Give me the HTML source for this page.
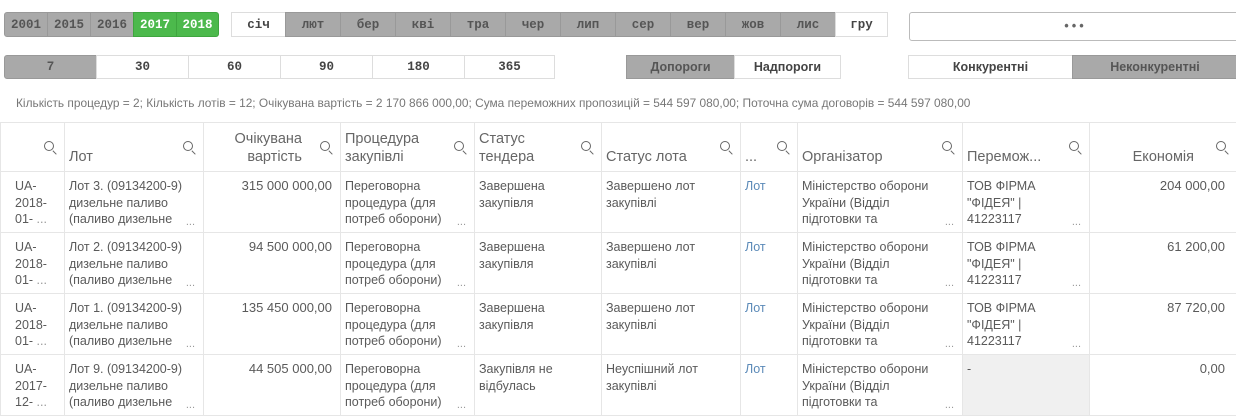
<!DOCTYPE html>
<html><head><meta charset="utf-8"><style>
body{margin:0;width:1236px;height:413px;overflow:hidden;background:#fff;font-family:"Liberation Sans","DejaVu Sans",sans-serif;position:relative}
.b{position:absolute;box-sizing:border-box;display:flex;align-items:center;justify-content:center;font-family:"Liberation Mono",monospace;font-weight:bold;font-size:12.5px;color:#595959;border:1px solid #ddd}
.g{background:#a9a9a9;border-color:#999;color:#555}
.gr{background:#4cb94c;border-color:#3fa53f;color:#fff}
.w{background:#fff;color:#444}
.sum{position:absolute;left:16px;top:96px;font-size:11.9px;color:#777;white-space:nowrap}
table{position:absolute;left:0;top:122px;border-collapse:collapse;table-layout:fixed;width:1236px;font-size:12.5px;color:#5a5a5a}
td,th{border:1px solid #e6e6e6;vertical-align:top;padding:0 20px 0 4px;overflow:hidden;position:relative;box-sizing:border-box}
th{height:49px;font-weight:normal;font-size:14.5px;color:#666;text-align:left;vertical-align:bottom;padding-bottom:5px;line-height:18px}
td{height:61px;padding-top:6px;line-height:16.5px}
th .q{position:absolute;right:10px;top:18px;width:8px;height:8px;border:1.3px solid #666;border-radius:50%}
th .q:after{content:"";position:absolute;right:-4px;bottom:-3px;width:5px;height:1.3px;background:#666;transform:rotate(45deg)}
.r{text-align:right}
td.m{font-size:13px;padding-right:8px;white-space:nowrap}
td.e{padding-right:11px}
.d{position:absolute;right:8px;bottom:2px;color:#999;font-size:11px}
.l{color:#5b8ab8}
td.f{padding-left:14px;padding-right:2px}
</style></head><body>
<div class="b g" style="left:4px;top:12px;width:44px;height:25px;border-radius:3px 0 0 3px">2001</div>
<div class="b g" style="left:47px;top:12px;width:44px;height:25px">2015</div>
<div class="b g" style="left:90px;top:12px;width:44px;height:25px">2016</div>
<div class="b gr" style="left:133px;top:12px;width:44px;height:25px">2017</div>
<div class="b gr" style="left:176px;top:12px;width:43px;height:25px;border-radius:0 3px 3px 0">2018</div>
<div class="b w" style="left:231px;top:12px;width:55px;height:25px">січ</div>
<div class="b g" style="left:285px;top:12px;width:56px;height:25px">лют</div>
<div class="b g" style="left:340px;top:12px;width:56px;height:25px">бер</div>
<div class="b g" style="left:395px;top:12px;width:56px;height:25px">кві</div>
<div class="b g" style="left:450px;top:12px;width:56px;height:25px">тра</div>
<div class="b g" style="left:505px;top:12px;width:56px;height:25px">чер</div>
<div class="b g" style="left:560px;top:12px;width:56px;height:25px">лип</div>
<div class="b g" style="left:615px;top:12px;width:56px;height:25px">сер</div>
<div class="b g" style="left:670px;top:12px;width:56px;height:25px">вер</div>
<div class="b g" style="left:725px;top:12px;width:56px;height:25px">жов</div>
<div class="b g" style="left:780px;top:12px;width:56px;height:25px">лис</div>
<div class="b w" style="left:835px;top:12px;width:53px;height:25px">гру</div>
<div class="b w" style="left:909px;top:12px;width:330px;height:29px;border-color:#bbb;border-radius:3px;color:#666">•••</div>
<div class="b g" style="left:4px;top:55px;width:93px;height:24px;border-radius:3px 0 0 3px">7</div>
<div class="b w" style="left:96px;top:55px;width:93px;height:24px">30</div>
<div class="b w" style="left:188px;top:55px;width:93px;height:24px">60</div>
<div class="b w" style="left:280px;top:55px;width:93px;height:24px">90</div>
<div class="b w" style="left:372px;top:55px;width:93px;height:24px">180</div>
<div class="b w" style="left:464px;top:55px;width:91px;height:24px">365</div>
<div class="b g" style="left:626px;top:55px;width:109px;height:24px;font-family:'Liberation Sans',sans-serif">Допороги</div>
<div class="b w" style="left:734px;top:55px;width:107px;height:24px;font-family:'Liberation Sans',sans-serif">Надпороги</div>
<div class="b w" style="left:908px;top:55px;width:165px;height:24px;font-family:'Liberation Sans',sans-serif">Конкурентні</div>
<div class="b g" style="left:1072px;top:55px;width:166px;height:24px;font-family:'Liberation Sans',sans-serif">Неконкурентні</div>
<div class="sum">Кількість процедур = 2; Кількість лотів = 12; Очікувана вартість = 2 170 866 000,00; Сума переможних пропозицій = 544 597 080,00; Поточна сума договорів = 544 597 080,00</div>
<table>
<colgroup><col style="width:64px"><col style="width:139px"><col style="width:137px"><col style="width:134px"><col style="width:127px"><col style="width:139px"><col style="width:57px"><col style="width:165px"><col style="width:127px"><col style="width:147px"></colgroup>
<tr><th><span class="q"></span></th><th>Лот<span class="q"></span></th><th class="r" style="padding-right:38px">Очікувана<br>вартість<span class="q"></span></th><th>Процедура<br>закупівлі<span class="q"></span></th><th>Статус<br>тендера<span class="q"></span></th><th>Статус лота<span class="q"></span></th><th>...<span class="q"></span></th><th>Організатор<span class="q"></span></th><th>Перемож...<span class="q"></span></th><th class="r" style="padding-right:42px">Економія<span class="q"></span></th></tr>
<tr><td class="f">UA-<br>2018-<br>01- <span style="color:#999">...</span></td><td>Лот 3. (09134200-9) дизельне паливо (паливо дизельне<span class="d">...</span></td><td class="r m">315 000 000,00</td><td>Переговорна процедура (для потреб оборони)<span class="d">...</span></td><td>Завершена закупівля</td><td>Завершено лот закупівлі</td><td class="l">Лот</td><td>Міністерство оборони України (Відділ підготовки та<span class="d">...</span></td><td>ТОВ ФІРМА "ФІДЕЯ" | 41223117<span class="d">...</span></td><td class="r m e">204 000,00</td></tr>
<tr><td class="f">UA-<br>2018-<br>01- <span style="color:#999">...</span></td><td>Лот 2. (09134200-9) дизельне паливо (паливо дизельне<span class="d">...</span></td><td class="r m">94 500 000,00</td><td>Переговорна процедура (для потреб оборони)<span class="d">...</span></td><td>Завершена закупівля</td><td>Завершено лот закупівлі</td><td class="l">Лот</td><td>Міністерство оборони України (Відділ підготовки та<span class="d">...</span></td><td>ТОВ ФІРМА "ФІДЕЯ" | 41223117<span class="d">...</span></td><td class="r m e">61 200,00</td></tr>
<tr><td class="f">UA-<br>2018-<br>01- <span style="color:#999">...</span></td><td>Лот 1. (09134200-9) дизельне паливо (паливо дизельне<span class="d">...</span></td><td class="r m">135 450 000,00</td><td>Переговорна процедура (для потреб оборони)<span class="d">...</span></td><td>Завершена закупівля</td><td>Завершено лот закупівлі</td><td class="l">Лот</td><td>Міністерство оборони України (Відділ підготовки та<span class="d">...</span></td><td>ТОВ ФІРМА "ФІДЕЯ" | 41223117<span class="d">...</span></td><td class="r m e">87 720,00</td></tr>
<tr><td class="f">UA-<br>2017-<br>12- <span style="color:#999">...</span></td><td>Лот 9. (09134200-9) дизельне паливо (паливо дизельне<span class="d">...</span></td><td class="r m">44 505 000,00</td><td>Переговорна процедура (для потреб оборони)<span class="d">...</span></td><td>Закупівля не відбулась</td><td>Неуспішний лот закупівлі</td><td class="l">Лот</td><td>Міністерство оборони України (Відділ підготовки та<span class="d">...</span></td><td style="background:#f0f0f0">-</td><td class="r m e">0,00</td></tr>
</table>
</body></html>
